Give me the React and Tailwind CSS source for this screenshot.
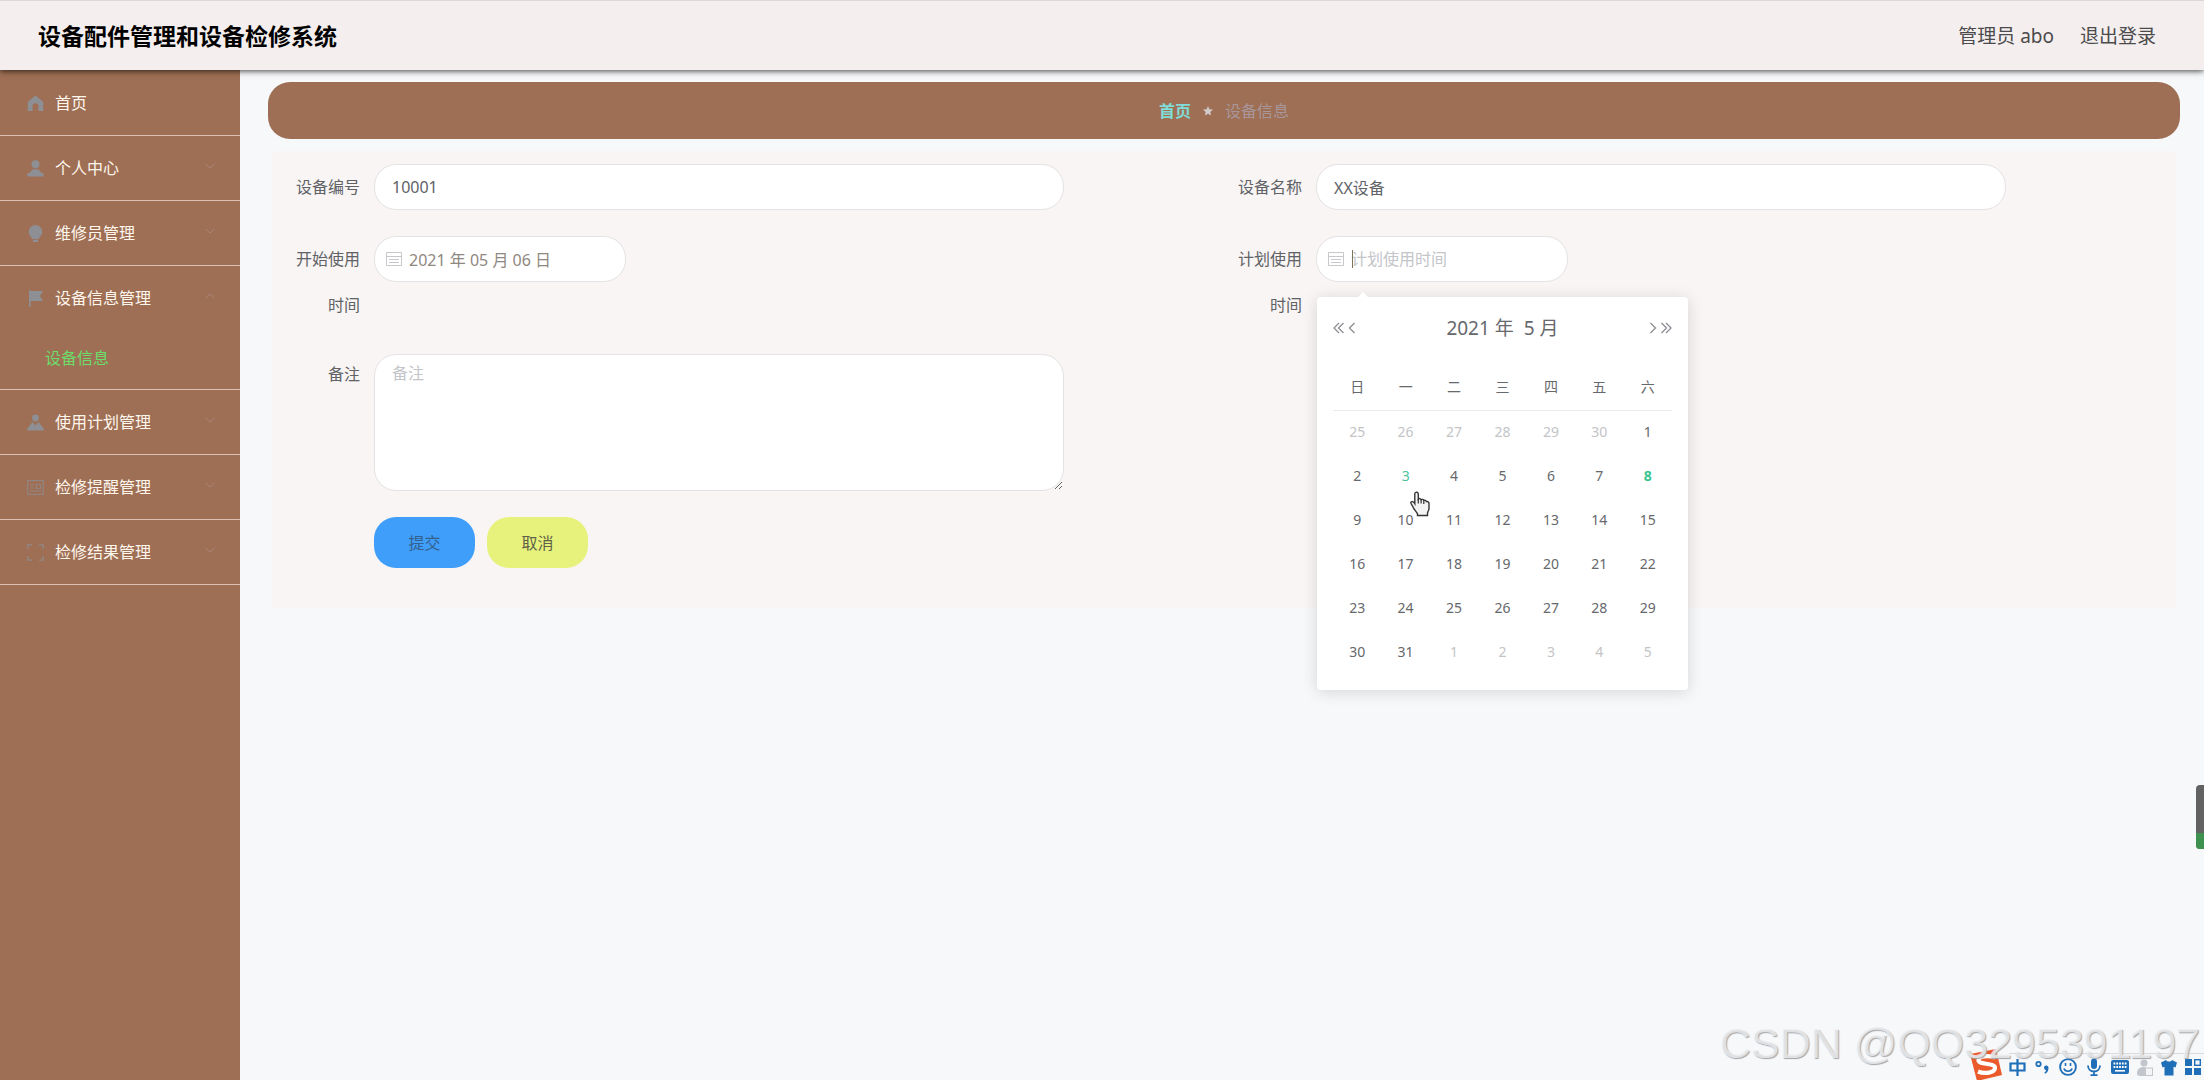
import React from "react";

const MENU_ICONS = {
  home: (
    <path d="M8.5 0.5 0.8 6.8V16H5.6V11.2a2.9 2.9 0 0 1 5.8 0V16h4.8V6.8Z" />
  ),
  user: (
    <>
      <circle cx="8.5" cy="4.3" r="4" />
      <path d="M5.6 9.2h5.8L16.6 15.6H.4Z" />
      <rect x="0.4" y="13" width="16.2" height="3.4" rx="1" />
    </>
  ),
  bulb: (
    <>
      <path d="M8.5 0a6.8 6.8 0 0 0-6.8 6.8c0 3.4 2.6 4.8 3.6 7.4h6.4c1-2.6 3.6-4 3.6-7.4A6.8 6.8 0 0 0 8.5 0Z" />
      <rect x="6" y="15" width="5" height="2" />
    </>
  ),
  flag: <path d="M2 0h1.6v1H16l-3 5 3 5H3.6v6H2Z" />,
  custom: (
    <>
      <circle cx="8.5" cy="4" r="3.4" />
      <path d="M5.4 8 8.5 11.4 11.6 8 16.6 14.4V16.6H.4V14.4Z" />
    </>
  ),
  postcard: (
    <g fill="none" stroke="currentColor" strokeWidth="1.2" opacity="0.7">
      <rect x="0.7" y="1.6" width="15.6" height="13.8" />
      <path d="M3 6h4M3 9h4M3 12h11M9.5 5.5h4v4h-4Z" />
    </g>
  ),
  full: (
    <g fill="none" stroke="currentColor" strokeWidth="1.3" opacity="0.8">
      <path d="M.8 5V.8H5M12 .8h4.2V5M16.2 12v4.2H12M5 16.2H.8V12" />
    </g>
  ),
};

const MENU = [
  { label: "首页", icon: "home" },
  { label: "个人中心", icon: "user", arrow: "down" },
  { label: "维修员管理", icon: "bulb", arrow: "down" },
  { label: "设备信息管理", icon: "flag", arrow: "up", children: ["设备信息"] },
  { label: "使用计划管理", icon: "custom", arrow: "down" },
  { label: "检修提醒管理", icon: "postcard", arrow: "down" },
  { label: "检修结果管理", icon: "full", arrow: "down" },
];

const WEEKDAYS = ["日", "一", "二", "三", "四", "五", "六"];
const WEEKS = [
  [25, 26, 27, 28, 29, 30, 1],
  [2, 3, 4, 5, 6, 7, 8],
  [9, 10, 11, 12, 13, 14, 15],
  [16, 17, 18, 19, 20, 21, 22],
  [23, 24, 25, 26, 27, 28, 29],
  [30, 31, 1, 2, 3, 4, 5],
];

function dayClass(week, day) {
  if ((week === 0 && day > 20) || (week === 5 && day < 10)) return "text-[#c3c4c6]";
  if (week === 1 && day === 8) return "font-bold text-[#35c48f]";
  if (week === 1 && day === 3) return "text-[#4cc49a]";
  return "text-[#66686c]";
}

function Header() {
  return (
    <header className="relative z-10 flex h-[70px] items-center justify-between border-t border-[#dcd8d9] bg-[#f4efee] pr-12 pl-[38px] shadow-[0_1px_6px_rgba(0,0,0,0.75)]">
      <h1 className="text-[23px] leading-8 font-bold text-black">设备配件管理和设备检修系统</h1>
      <nav className="flex gap-[26px] text-[19px] leading-7 text-[#4b4a4c]">
        <span>管理员 abo</span>
        <a href="#logout">退出登录</a>
      </nav>
    </header>
  );
}

function Sidebar() {
  return (
    <nav className="w-60 shrink-0 bg-[#9e6f54]">
      <ul className="pt-px">
        {MENU.map((item) => (
          <li key={item.label} className="border-b border-[#dcc0b3]">
            <button type="button" className="flex h-16 w-full items-center pr-6 pl-[27px] text-left text-[#fff6ee]">
              <svg viewBox="0 0 17 17" className="mr-[11px] size-[17px] text-[#8d8f95]" fill="currentColor">
                {MENU_ICONS[item.icon]}
              </svg>
              <span className="grow text-base">{item.label}</span>
              {item.arrow && (
                <svg viewBox="0 0 12 12" className="size-3 text-[#a98578]" fill="none" stroke="currentColor">
                  <path d={item.arrow === "up" ? "M1.5 6 6 2l4.500 4" : "M1.500 2 6 6l4.500-4"} />
                </svg>
              )}
            </button>
            {item.children?.map((child) => (
              <a key={child} href="#device" className="flex h-[59px] items-center pb-1 pl-[45px] text-base text-[#6cdc6a]">
                {child}
              </a>
            ))}
          </li>
        ))}
      </ul>
    </nav>
  );
}

function CalendarIcon() {
  return (
    <svg viewBox="0 0 16 16" className="pointer-events-none absolute top-[15px] left-3 size-4 text-[#c6c8cb]" fill="none" stroke="currentColor">
      <path d="M.5 1.500h15v13H.5ZM.5 5.500h15M3 8.500h10M3 11.500h10" />
    </svg>
  );
}

function Field({ id, label, children }) {
  return (
    <div className="flex items-start">
      <label htmlFor={id} className="w-[92px] shrink-0 pr-[14px] text-right text-base leading-[46px] text-[#606266]">
        {label}
      </label>
      {children}
    </div>
  );
}

const inputClass =
  "h-[46px] rounded-[22px] border border-[#e4e2e4] bg-white text-base outline-none placeholder:text-[#c3c5c9]";

function Chevrons({ double, flip }) {
  return (
    <svg
      viewBox={double ? "0 0 11 12" : "0 0 8 12"}
      className={flip ? "h-3 w-auto rotate-180" : "h-3 w-auto"}
      fill="none"
      stroke="currentColor"
      strokeWidth="1.3"
    >
      <path d={double ? "M6 1 1 6l5 5M10.500 1l-5 5 5 5" : "M6.500 1l-5 5 5 5"} />
    </svg>
  );
}

function DatePanel() {
  return (
    <div className="absolute top-[61px] left-px z-20 w-[371px] rounded bg-white px-4 pt-[17px] pb-4 shadow-[0_2px_16px_rgba(0,0,0,0.14)]">
      <svg viewBox="0 0 12 6" className="absolute -top-[5px] left-10 h-[6px] w-3" fill="#fff">
        <path d="M0 6 6 0l6 6Z" />
      </svg>
      <div className="flex h-7 items-center justify-between text-[#8c8e93]">
        <div className="flex items-center gap-1">
          <button type="button" aria-label="前一年"><Chevrons double /></button>
          <button type="button" aria-label="上个月"><Chevrons /></button>
        </div>
        <div className="flex gap-[10px] text-[19px] leading-7 text-[#66686c]">
          <button type="button">2021 年</button>
          <button type="button">5 月</button>
        </div>
        <div className="flex items-center gap-1">
          <button type="button" aria-label="下个月"><Chevrons flip /></button>
          <button type="button" aria-label="后一年"><Chevrons double flip /></button>
        </div>
      </div>
      <table className="mt-[22px] w-full table-fixed border-collapse text-center text-sm">
        <thead>
          <tr>
            {WEEKDAYS.map((d) => (
              <th key={d} className="h-[46px] border-b border-[#e8e9ec] font-normal text-[#66686c]">
                {d}
              </th>
            ))}
          </tr>
        </thead>
        <tbody>
          {WEEKS.map((week, w) => (
            <tr key={w}>
              {week.map((day) => (
                <td key={day} className="h-11 p-0">
                  <button type="button" className={dayClass(w, day)}>{day}</button>
                </td>
              ))}
            </tr>
          ))}
        </tbody>
      </table>
      <svg viewBox="0 0 20 26" className="pointer-events-none absolute top-[194px] left-[93px] h-[26px] w-5">
        <path
          d="M5.500 1.500c1.200-.8 2.800 0 2.800 1.600v5c.8-.9 2.400-.6 2.800.6.900-.7 2.300-.3 2.700.8 1-.6 2.300 0 2.600 1.100 1.300-.4 2.600.4 2.600 2v5c0 1.800-1.500 3-1.500 4.800v2.100H7.500v-1.700C6 20.300 4 18.500 2.800 15.500 2 13.800.4 12.400.9 11.300c.6-1.200 2.600-.9 3.900 1.400V3.100c0-.7.2-1.300.7-1.600Z"
          fill="#f4f4f4"
          stroke="#333"
          strokeWidth="1.4"
        />
        <path d="M8.300 8v4.500M11.100 9v3.500M13.800 10v3" stroke="#333" strokeWidth="1.200" />
      </svg>
    </div>
  );
}

function DeviceForm() {
  return (
    <form className="mx-1 mt-3 rounded bg-[#f8f5f4] px-[10px] pt-[13px] pb-10">
      <div className="grid grid-cols-2 gap-y-[26px]">
        <Field id="code" label="设备编号">
          <input id="code" defaultValue="10001" className={`${inputClass} w-[690px] px-[17px] text-[#606266]`} />
        </Field>
        <Field id="name" label="设备名称">
          <input id="name" defaultValue="XX设备" className={`${inputClass} w-[690px] px-[17px] text-[#606266]`} />
        </Field>
        <Field id="start" label="开始使用时间">
          <div className="relative">
            <CalendarIcon />
            <input id="start" defaultValue="2021 年 05 月 06 日" className={`${inputClass} w-[252px] pr-4 pl-[34px] text-[#8f8880]`} />
          </div>
        </Field>
        <Field id="plan" label="计划使用时间">
          <div className="relative">
            <CalendarIcon />
            <input id="plan" placeholder="计划使用时间" className={`${inputClass} w-[252px] pr-4 pl-[34px]`} />
            <span className="absolute top-[14px] left-9 h-[18px] w-px bg-[#77765c]" />
            <DatePanel />
          </div>
        </Field>
        <div className="col-span-2 flex items-start">
          <label htmlFor="remark" className="w-[92px] shrink-0 pr-[14px] text-right text-base leading-10 text-[#606266]">
            备注
          </label>
          <textarea
            id="remark"
            placeholder="备注"
            className="h-[137px] w-[690px] rounded-[22px] border border-[#e4e2e4] bg-white px-[17px] py-[6px] text-base outline-none placeholder:text-[#c3c5c9]"
          />
        </div>
        <div className="col-span-2 flex gap-3 pl-[92px]">
          <button type="submit" className="h-[51px] w-[101px] rounded-[22px] bg-[#409efb] text-base text-[#34608c]">提交</button>
          <button type="button" className="h-[51px] w-[101px] rounded-[22px] bg-[#e7f27c] text-base text-[#5f6248]">取消</button>
        </div>
      </div>
    </form>
  );
}

function InputMethodBar() {
  return (
    <div className="absolute right-0 bottom-0 flex h-[31px] items-center text-[#1f6fb8]">
      <svg viewBox="0 0 34 31" className="mr-[6px] h-[31px] w-[34px]">
        <path d="M1 5 27 0 33 26 8 32Z" fill="#ea5a2b" />
        <path d="M26 8.500C19 6 9 7 9.500 11.500 10 16 26 13.500 26 19c0 5-11 6-17 3.500" fill="none" stroke="#fff" strokeWidth="4.200" />
      </svg>
      <div className="flex h-[27px] items-center gap-2 self-end border-t border-[#dadbdd] pr-[3px]">
        <svg viewBox="0 0 17 17" className="size-[17px]" fill="none" stroke="currentColor" strokeWidth="2.200">
          <path d="M1.500 4.500h14v7h-14ZM8.500 0v17" />
        </svg>
        <svg viewBox="0 0 17 17" className="size-[17px]">
          <circle cx="4.500" cy="5" r="2.200" fill="none" stroke="currentColor" strokeWidth="1.800" />
          <path d="M10 8.500a2.200 2.200 0 1 1 4.500.5c0 3-1.500 5-3.500 5.700l-.6-1.200c1-.6 1.600-1.500 1.600-2.500-1.200 0-2-1-2-2.500Z" fill="currentColor" />
        </svg>
        <svg viewBox="0 0 18 18" className="size-[18px]" fill="none" stroke="currentColor" strokeWidth="1.900">
          <circle cx="9" cy="9" r="7.900" />
          <path d="M5 10.500c1 3.600 7 3.600 8 0M6.500 5v3M11.500 5v3" strokeWidth="1.600" />
        </svg>
        <svg viewBox="0 0 14 18" className="mx-[2px] h-[18px] w-[14px]" fill="none" stroke="currentColor" strokeWidth="1.800">
          <rect x="4" y="0.500" width="6" height="10.500" rx="3" fill="currentColor" stroke="none" />
          <path d="M1 7.500c0 8 12 8 12 0M7 13.500V17M3.500 17.200h7" />
        </svg>
        <svg viewBox="0 0 18 16" className="h-4 w-[18px]">
          <rect y="1" width="18" height="14" rx="2" fill="currentColor" />
          <path d="M2.500 4.500h13M2.500 8h13" stroke="#fff" strokeWidth="1.800" strokeDasharray="1.800 1" />
          <path d="M4 11.800h10" stroke="#fff" strokeWidth="1.600" />
        </svg>
        <svg viewBox="0 0 16 17" className="h-[17px] w-4" fill="#c2c5cc">
          <circle cx="7" cy="4" r="3.500" />
          <path d="M0 14c0-4 3-6 7-6l3 1v8H3c-2 0-3-1-3-3Z" />
          <rect x="8.500" y="9" width="7" height="7.500" fill="#f4f4f6" stroke="#c2c5cc" />
        </svg>
        <svg viewBox="0 0 16 17" className="h-[17px] w-4" fill="currentColor">
          <path d="M5 1c1 2 5 2 6 0l5 2.500-1.500 5-2-.8V16.500h-9V7.700l-2 .8L0 3.500Z" />
        </svg>
        <svg viewBox="0 0 16 16" className="size-4" fill="currentColor">
          <path d="M0 0h7v7H0ZM0 9h7v7H0ZM9 9h7v7H9Z" />
          <rect x="9.700" y="0.700" width="5.600" height="5.600" fill="none" stroke="currentColor" strokeWidth="1.400" />
        </svg>
      </div>
    </div>
  );
}

export default function App() {
  return (
    <div className="relative flex min-h-screen flex-col overflow-hidden bg-[#f6f8fa] font-['Noto_Sans','Noto_Sans_CJK_SC',sans-serif]">
      <Header />
      <div className="flex grow">
        <Sidebar />
        <main className="min-w-0 grow pt-3 pr-6 pl-7">
          <nav className="flex h-[57px] items-center justify-center gap-3 rounded-[22px] bg-[#9e6f54] text-base">
            <a href="#home" className="font-bold text-[#7fdcd6]">首页</a>
            <svg viewBox="0 0 10 10" className="size-[10px]" fill="#d0cbc9">
              <path d="m5 0 1.400 3.300 3.600.3-2.700 2.400.8 3.500L5 7.700 1.900 9.500l.8-3.500L0 3.600l3.600-.3Z" />
            </svg>
            <span className="text-[#a8969a]">设备信息</span>
          </nav>
          <DeviceForm />
        </main>
      </div>
      <div className="absolute top-[785px] right-0 h-16 w-2 overflow-hidden rounded-l bg-[#626262]">
        <div className="mt-12 h-4 bg-[#3f9150]" />
      </div>
      <InputMethodBar />
      <p className="pointer-events-none absolute right-1 bottom-[10px] font-['Liberation_Sans',sans-serif] text-[43px] leading-[54px] text-[#f0f1f3]/80 [text-shadow:1px_1px_1px_#a4a5a8]">
        CSDN @QQ3295391197
      </p>
    </div>
  );
}
